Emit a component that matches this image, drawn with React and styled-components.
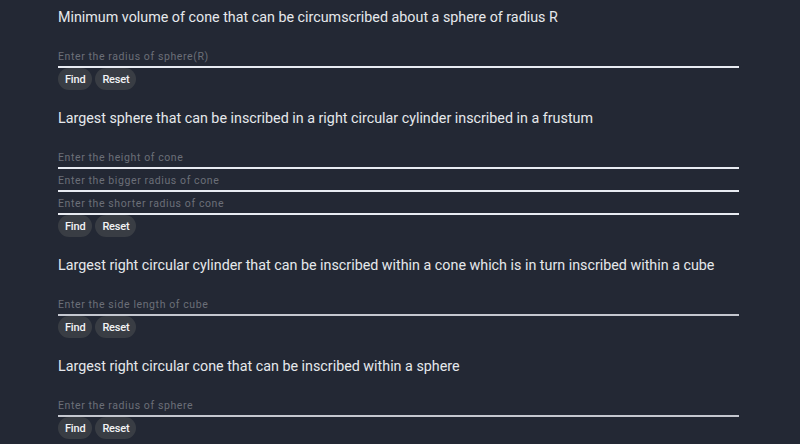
import React from "react";
import styled, { createGlobalStyle } from "styled-components";

const Global = createGlobalStyle`
  html, body { margin: 0; padding: 0; background: #232834; }
  body { overflow: hidden; }
`;

const Page = styled.div`
  background: #232834;
  min-height: 444px;
  padding: 7px 0 0 58px;
  box-sizing: border-box;
  font-family: "Roboto", "Liberation Sans", sans-serif;
`;

const Section = styled.section`
  width: 681px;
  display: flex;
  flex-direction: column;
  margin-bottom: 18px;
`;

const Title = styled.h2`
  margin: 0 0 18px 0;
  font-size: 14.3px;
  line-height: 20px;
  font-weight: 400;
  color: #e6e8ec;
  white-space: nowrap;
`;

const Field = styled.input`
  display: block;
  width: 100%;
  height: 23px;
  box-sizing: border-box;
  background: transparent;
  border: none;
  border-bottom: 2px solid ${(p) => (p.$bright ? "#e8ebf2" : "#c4c7cf")};
  outline: none;
  padding: 2px 0 0 0;
  font-family: "Roboto", "Liberation Sans", sans-serif;
  font-size: 10.5px;
  letter-spacing: 0.6px;
  color: #d0d3d8;
  &::placeholder { color: #6b6f78; }
`;

const Buttons = styled.div`
  display: flex;
  gap: 3px;
`;

const Btn = styled.button`
  height: 22px;
  padding: 0 7px;
  border: none;
  border-radius: 11px;
  background: #393d44;
  color: #f2f3f5;
  font-family: "Roboto", "Liberation Sans", sans-serif;
  font-size: 11px;
  font-weight: 500;
  letter-spacing: -0.2px;
  cursor: pointer;
`;

const Bar = styled.div`
  width: 203px;
  height: 1px;
  background: #b9bcc4;
  margin-top: -13px;
  margin-left: -58px;
`;

const sections = [
  {
    title: "Minimum volume of cone that can be circumscribed about a sphere of radius R",
    fields: ["Enter the radius of sphere(R)"],
  },
  {
    title: "Largest sphere that can be inscribed in a right circular cylinder inscribed in a frustum",
    fields: ["Enter the height of cone", "Enter the bigger radius of cone", "Enter the shorter radius of cone"],
  },
  {
    title: "Largest right circular cylinder that can be inscribed within a cone which is in turn inscribed within a cube",
    fields: ["Enter the side length of cube"],
  },
  {
    title: "Largest right circular cone that can be inscribed within a sphere",
    fields: ["Enter the radius of sphere"],
  },
];

export default function App() {
  return (
    <>
      <Global />
      <Page>
        {sections.map((s, i) => (
          <Section key={i}>
            <Title>{s.title}</Title>
            {s.fields.map((f, j) => (
              <Field key={j} placeholder={f} $bright={i < 2} />
            ))}
            <Buttons>
              <Btn>Find</Btn>
              <Btn>Reset</Btn>
            </Buttons>
          </Section>
        ))}
        <Bar />
      </Page>
    </>
  );
}
